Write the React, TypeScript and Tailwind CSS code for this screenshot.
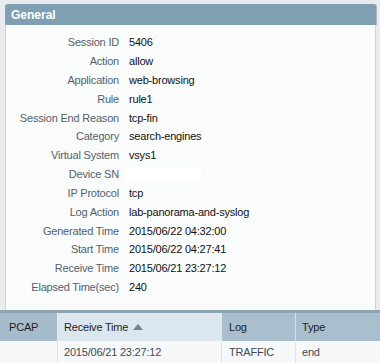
import React from "react";

const rows: [string, string][] = [
  ["Session ID", "5406"],
  ["Action", "allow"],
  ["Application", "web-browsing"],
  ["Rule", "rule1"],
  ["Session End Reason", "tcp-fin"],
  ["Category", "search-engines"],
  ["Virtual System", "vsys1"],
  ["Device SN", ""],
  ["IP Protocol", "tcp"],
  ["Log Action", "lab-panorama-and-syslog"],
  ["Generated Time", "2015/06/22 04:32:00"],
  ["Start Time", "2015/06/22 04:27:41"],
  ["Receive Time", "2015/06/21 23:27:12"],
  ["Elapsed Time(sec)", "240"],
];

export default function App() {
  return (
    <div
      className="w-[380px] h-[363px] bg-[#e9ebee] overflow-hidden flex flex-col text-[11px] tracking-[-0.2px]"
      style={{ fontFamily: '"Liberation Sans", Arial, sans-serif' }}
    >
      <div className="pt-[4px] pl-[5px] pr-[4px] h-[310px] flex flex-col">
        <div className="h-[21px] bg-[#7f9fb3] rounded-t-[3px] flex items-center pl-[6px] text-white font-bold text-[12px] tracking-normal shadow-[1px_0_0_#a9b8c2]">
          General
        </div>
        <div className="flex-1 bg-[#fafbfb] border-l border-r border-[#cfd3d7] pt-[8px]">
          {rows.map(([k, v]) => (
            <div key={k} className="h-[18.85px] flex items-center">
              <div className="w-[113px] text-right text-[#54616c]">{k}</div>
              <div className="ml-[10px] text-[#111] flex items-center">
                {k === "Device SN" ? (
                  <div className="w-[77px] h-[15px] bg-white -ml-[5px]" />
                ) : (
                  v
                )}
              </div>
            </div>
          ))}
        </div>
      </div>
      <div className="h-[3px] bg-[#8ea4b2]" />
      <div className="flex h-[28px] text-[#1e1e1e]">
        <div className="w-[58px] bg-[#a6bccb] border-r border-[#e4ecf1] flex items-center pl-[9px]">PCAP</div>
        <div className="w-[164px] bg-[#dbe6ee] border-r border-[#e4ecf1] flex items-center pl-[6px]">
          Receive Time
          <svg width="10" height="6" viewBox="0 0 10 6" className="ml-[5px]">
            <path d="M0 6 L5 0 L10 6 Z" fill="#6f8492" />
          </svg>
        </div>
        <div className="w-[74px] bg-[#a9bfce] border-r border-[#d4e0e8] flex items-center pl-[7px]">Log</div>
        <div className="flex-1 bg-[#a9bfce] flex items-center pl-[6px]">Type</div>
      </div>
      <div className="flex h-[22px] bg-[#f6f8fa] text-[#3f4b55]">
        <div className="w-[58px] border-r border-[#e0e5e9]" />
        <div className="w-[164px] border-r border-[#e0e5e9] flex items-center pl-[6px]">2015/06/21 23:27:12</div>
        <div className="w-[74px] border-r border-[#e0e5e9] flex items-center pl-[7px]">TRAFFIC</div>
        <div className="flex-1 flex items-center pl-[6px]">end</div>
      </div>
    </div>
  );
}
